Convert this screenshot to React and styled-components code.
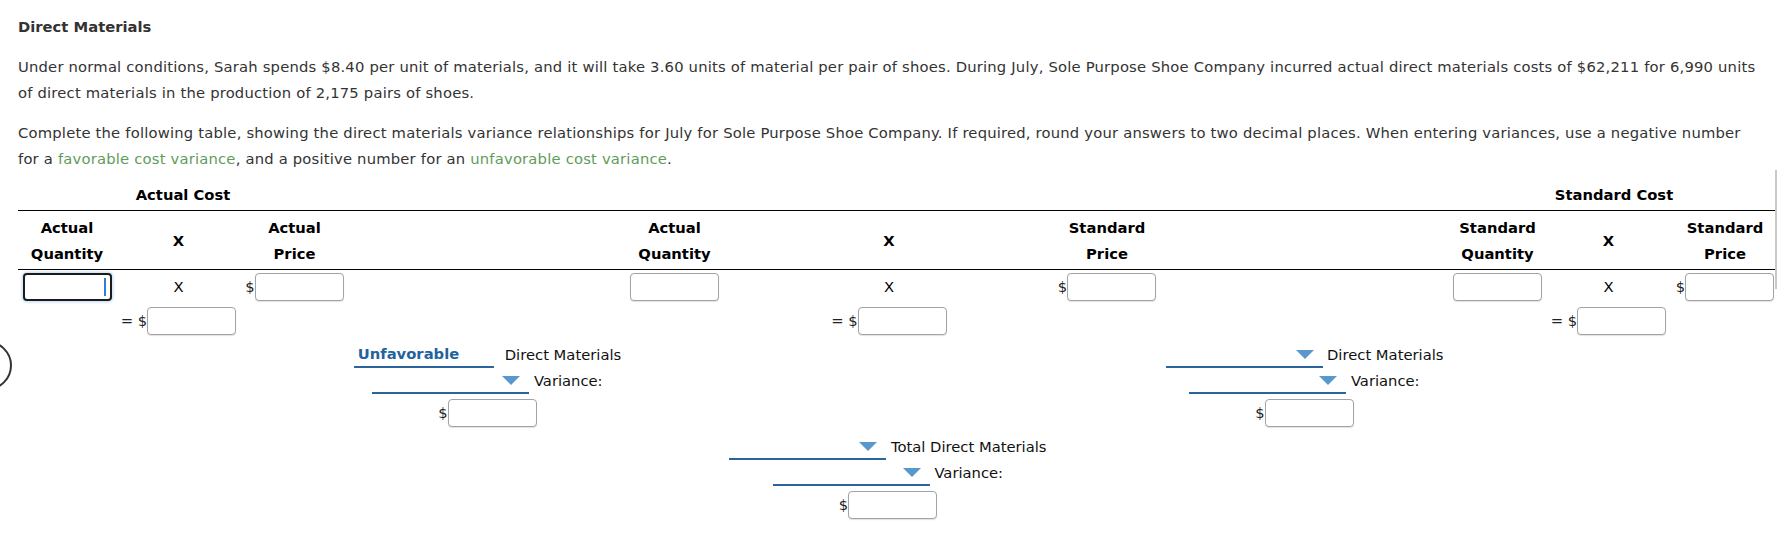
import React from 'react';
import styled, { createGlobalStyle } from 'styled-components';

const Global = createGlobalStyle`
  html, body { margin: 0; padding: 0; background: #fff; }
  body {
    font-family: "DejaVu Sans", Verdana, sans-serif;
    font-size: 14.75px;
    line-height: 26px;
    color: #333;
  }
  * { box-sizing: border-box; }
`;

const Page = styled.div`
  position: relative;
  width: 1779px;
  height: 548px;
  overflow: hidden;
  padding: 14px 0 0 18px;
`;

const Title = styled.h2`
  margin: 0;
  font-size: 14.75px;
  line-height: 26px;
  font-weight: bold;
  color: #333;
`;

const Para = styled.p`
  margin: 14px 0 0;
  white-space: nowrap;
  letter-spacing: 0.2px;
`;

const Hint = styled.span`
  color: #5f9c5a;
`;

const Table = styled.div`
  display: grid;
  grid-template-columns: 98px 125px 107px 272px 109px 320px 116px 288px 89px 133px 100px;
  grid-template-rows: 28px 1px 58px 1px 31px 34px 92px 92px;
  margin-top: 10px;
  color: #000;
`;

const GroupHead = styled.div`
  grid-column: ${p => p.$col};
  text-align: center;
  font-weight: bold;
  line-height: 26px;
`;

const Rule = styled.div`
  grid-column: 1 / -1;
  background: #000;
`;

const Head = styled.div`
  grid-column: ${p => p.$col};
  display: flex;
  align-items: center;
  justify-content: center;
  text-align: center;
  font-weight: bold;
  line-height: 26px;
  padding: 4px 0 2px;
`;

const Cell = styled.div`
  grid-column: ${p => p.$col};
  align-self: end;
  display: flex;
  align-items: center;
  justify-content: center;
  height: 28px;
`;

const Times = styled.span`
  color: #000;
`;

const Dollar = styled.span`
  color: #222;
`;

const Eq = styled.span`
  color: #222;
  margin-right: 4.7px;
`;

const FieldWrap = styled.span`
  position: relative;
  display: inline-block;
  width: 89px;
  height: 28px;
`;

const Field = styled.input`
  display: block;
  width: 89px;
  height: 28px;
  margin: 0;
  padding: 0 6px;
  font: inherit;
  text-align: right;
  background: #fff;
  border-radius: 4px;
  outline: none;
  border: ${p => (p.$focus ? '2px solid #1b1b1b' : '1px solid #a3a3a3')};
  box-shadow: ${p =>
    p.$focus
      ? '0 0 0 1px #d6e8f8, 0 0 3px 1px #b5d4f1'
      : '0 1px 1px rgba(0,0,0,0.12)'};
`;

const Caret = styled.span`
  position: absolute;
  right: 6px;
  top: 5px;
  width: 2px;
  height: 18px;
  background: #2f7fd1;
`;

const VarBlock = styled.div`
  grid-column: ${p => p.$col};
  align-self: end;
  display: flex;
  flex-direction: column;
  align-items: center;
  padding-left: ${p => p.$pl || 0}px;
  padding-right: ${p => p.$pr || 0}px;
`;

const VarLine = styled.div`
  display: flex;
  align-items: flex-end;
  height: 26px;
  white-space: nowrap;
  color: #111;
`;

const Select = styled.span`
  position: relative;
  display: flex;
  align-items: center;
  width: ${p => p.$w}px;
  height: 26px;
  margin-right: ${p => p.$gap}px;
  padding-left: 4px;
  border-bottom: 2px solid #2a6499;
  color: #23639d;
  font-weight: bold;
`;

const Arrow = styled.svg`
  position: absolute;
  right: 9px;
  top: 8px;
`;

const AmountLine = styled.div`
  display: flex;
  align-items: center;
  height: 28px;
  margin-top: 5px;
`;

const Ring = styled.div`
  position: absolute;
  left: -37px;
  top: 341px;
  width: 49px;
  height: 49px;
  border: 2.5px solid #333;
  border-radius: 50%;
`;

const Scroll = styled.div`
  position: absolute;
  right: 2px;
  top: 170px;
  width: 2px;
  height: 119px;
  background: #c8c8c8;
`;

const Input = ({ focus }) => (
  <FieldWrap>
    <Field $focus={focus} readOnly />
    {focus && <Caret />}
  </FieldWrap>
);

const Money = ({ col }) => (
  <Cell $col={col}>
    <Dollar>$</Dollar>
    <Input />
  </Cell>
);

const Product = ({ col }) => (
  <Cell $col={col}>
    <Eq>=</Eq>
    <Dollar>$</Dollar>
    <Input />
  </Cell>
);

const Tri = () => (
  <Arrow width="18" height="9" viewBox="0 0 18 9">
    <polygon points="0,0 18,0 9,9" fill="#5b97cf" />
  </Arrow>
);

const Variance = ({ col, pl, pr, first, second, w1, gap1, value }) => (
  <VarBlock $col={col} $pl={pl} $pr={pr}>
    <VarLine>
      <Select $w={w1} $gap={gap1}>
        {value ? value : <Tri />}
      </Select>
      <span>{first}</span>
    </VarLine>
    <VarLine>
      <Select $w={157} $gap={4.5}>
        <Tri />
      </Select>
      <span>{second}</span>
    </VarLine>
    <AmountLine>
      <Dollar>$</Dollar>
      <Input />
    </AmountLine>
  </VarBlock>
);

export default function App() {
  return (
    <>
      <Global />
      <Page>
        <Title>Direct Materials</Title>
        <Para>
          Under normal conditions, Sarah spends $8.40 per unit of materials, and it will take 3.60 units of material per pair of shoes. During July, Sole Purpose Shoe Company incurred actual direct materials costs of $62,211 for 6,990 units
          <br />
          of direct materials in the production of 2,175 pairs of shoes.
        </Para>
        <Para>
          Complete the following table, showing the direct materials variance relationships for July for Sole Purpose Shoe Company. If required, round your answers to two decimal places. When entering variances, use a negative number
          <br />
          for a <Hint>favorable cost variance</Hint>, and a positive number for an <Hint>unfavorable cost variance</Hint>.
        </Para>

        <Table>
          <GroupHead $col="1 / 4">Actual Cost</GroupHead>
          <GroupHead $col="9 / 12">Standard Cost</GroupHead>
          <Rule />

          <Head $col="1">Actual<br />Quantity</Head>
          <Head $col="2">X</Head>
          <Head $col="3">Actual<br />Price</Head>
          <Head $col="5">Actual<br />Quantity</Head>
          <Head $col="6">X</Head>
          <Head $col="7">Standard<br />Price</Head>
          <Head $col="9">Standard<br />Quantity</Head>
          <Head $col="10">X</Head>
          <Head $col="11">Standard<br />Price</Head>
          <Rule />

          <Cell $col="1"><Input focus /></Cell>
          <Cell $col="2"><Times>X</Times></Cell>
          <Money col="3" />
          <Cell $col="5"><Input /></Cell>
          <Cell $col="6"><Times>X</Times></Cell>
          <Money col="7" />
          <Cell $col="9"><Input /></Cell>
          <Cell $col="10"><Times>X</Times></Cell>
          <Money col="11" />

          <Product col="2" />
          <Product col="6" />
          <Product col="10" />

          <Variance
            col="3 / 6"
            pl={5}
            w1={140}
            gap1={11}
            value="Unfavorable"
            first="Direct Materials"
            second="Variance:"
          />
          <Variance
            col="7 / 10"
            pl={18}
            w1={157}
            gap1={4.5}
            first="Direct Materials"
            second="Variance:"
          />

          <Variance
            col="5 / 8"
            pr={9}
            w1={157}
            gap1={4.5}
            first="Total Direct Materials"
            second="Variance:"
          />
        </Table>

        <Ring />
        <Scroll />
      </Page>
    </>
  );
}
